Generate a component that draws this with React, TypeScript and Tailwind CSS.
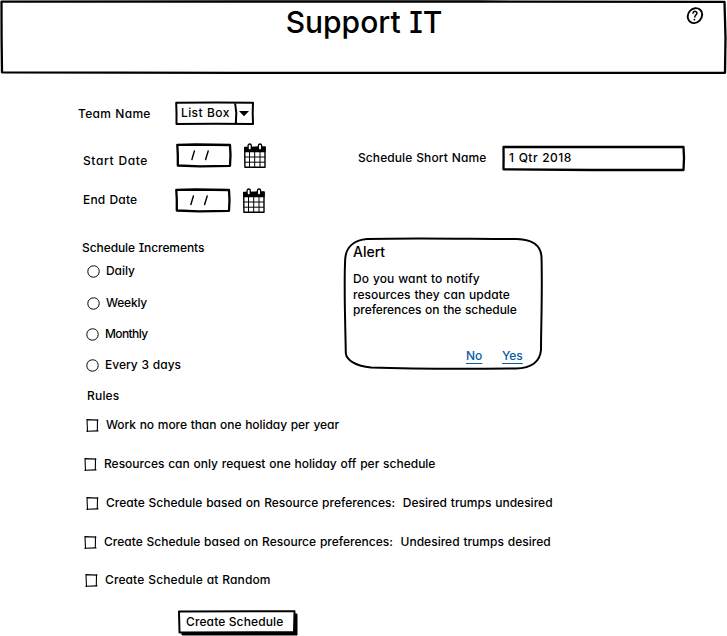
import type { ReactNode } from "react";

type TextProps = { children: ReactNode; className?: string };

function Text({ children, className = "" }: TextProps) {
  return <span className={`block h-5 whitespace-pre leading-5 ${className}`}>{children}</span>;
}

/* Hand-drawn outline laid behind the content of its parent. */
function Outline({ w, h, d, stroke = 2.3, fill = "none" }: { w: number; h: number; d: string; stroke?: number; fill?: string }) {
  return (
    <svg className="pointer-events-none absolute left-0 top-0 overflow-visible" width={w} height={h} viewBox={`0 0 ${w} ${h}`}>
      <path d={d} fill={fill} stroke="#000" strokeWidth={stroke} strokeLinejoin="round" />
    </svg>
  );
}

function HelpIcon() {
  return (
    <svg width="18" height="18" viewBox="0 0 18 18" fill="none" stroke="#000" strokeLinecap="round">
      <path d="M9 1.200C13 .900 16.400 3.600 16.200 7.600c-.200 4.300-3.500 8.300-7.900 8.500C4.200 16.300 1.500 13 1.700 9.400 1.900 5.600 4.800 1.500 9 1.200Z" strokeWidth="1.900" />
      <path d="M7 6.200C7.300 4.700 8.400 4.100 9.600 4.400c1.500.400 1.700 1.900.800 3C9.700 8.300 8.900 8.700 8.800 10" strokeWidth="1.500" />
      <path d="M8.400 12.500v.200" strokeWidth="1.700" />
    </svg>
  );
}

function CalendarIcon() {
  return (
    <svg width="24" height="26" viewBox="0 0 24 26">
      <path d="M1.700 4.500 22 4v20.300H1.900Z" fill="#fff" stroke="#000" strokeWidth="1.400" strokeLinejoin="round" />
      <path d="M1 4.200 22.700 3.700v5.500H1Z" />
      <path d="M6.500 9v15M11.700 9v15M17 9v15M2 14h20M2 19.200h20" stroke="#000" strokeWidth="1" />
      <rect x="5.100" y="1" width="3.200" height="6" rx="1.600" fill="#fff" stroke="#000" strokeWidth="1.300" />
      <rect x="15.400" y="1" width="3.200" height="6" rx="1.600" fill="#fff" stroke="#000" strokeWidth="1.300" />
    </svg>
  );
}

function DateBox() {
  return (
    <div className="relative h-[25px] w-[56px]">
      <Outline w={56} h={25} d="M1.300 1.800 20 1.500 54 2 54.500 12 54 22.800 24 23.300 1.800 22.500 1.800 12Z" />
      <svg className="absolute left-[15px] top-[7px]" width="20" height="11" viewBox="0 0 20 11" stroke="#000" strokeWidth="1.400" strokeLinecap="round">
        <path d="M3.400 1 .900 9.500M17.200 1 14.600 9.500" />
      </svg>
    </div>
  );
}

function Radio({ label, className, text }: { label: string; className: string; text: string }) {
  return (
    <div className={`flex h-5 items-center ${className}`}>
      <svg className="mr-[6px] shrink-0" width="13" height="13" viewBox="0 0 13 13">
        <path d="M6.500.800C10 .700 12.200 3.300 12.200 6.500c0 3.300-2.500 5.700-5.800 5.700C3 12.200.800 9.600.800 6.500.800 3.200 3.200.900 6.500.800Z" fill="none" stroke="#000" strokeWidth="1" />
      </svg>
      <Text className={text}>{label}</Text>
    </div>
  );
}

function Check({ label, className, text }: { label: string; className: string; text: string }) {
  return (
    <div className={`flex h-5 items-center ${className}`}>
      <svg className="mr-[7px] shrink-0" width="13" height="13" viewBox="0 0 13 13">
        <path d="M.800.600 12 1.100M11.500.600 11.300 12.300M12 11.900.800 12.200M1.500 12.600 1 .800" fill="none" stroke="#000" strokeWidth="1.100" strokeLinecap="round" />
      </svg>
      <Text className={text}>{label}</Text>
    </div>
  );
}

export default function App() {
  return (
    <div className="h-[636px] w-[727px] overflow-hidden bg-white font-['Inter','Liberation_Sans',sans-serif] text-[12px] font-[450] text-black [word-spacing:0.600px] [font-feature-settings:'cv11','cv08']">
      <header className="relative flex h-[74px] justify-center">
        <Outline w={727} h={74} d="M1.500 1.600 240 1.500 480 1.500 724.500 1.800 725.500 38 725 72.800 480 72.800 240 72.800 2 72.300 1.600 38Z" />
        <h1 className="ml-px mt-[2px] h-10 whitespace-pre text-[30px] font-[450] leading-10">Support IT</h1>
        <div className="absolute left-[686px] top-[7px]"><HelpIcon /></div>
      </header>

      <div className="flex h-[312px]">
        <section className="w-[344px]">
          <div className="flex pt-[27px]">
            <Text className="ml-[78px] mt-[3px] w-[97px] tracking-[0.300px]">Team Name</Text>
            <div className="relative flex h-[25px] w-[79px]">
              <Outline w={79} h={25} d="M1.200 1.700 40 1.500 78 1.800 77.700 12 78 23 40 22.800 1.500 23 1.500 12ZM60 1.500 61.300 12 60.800 22.700" stroke={2} />
              <Text className="ml-[6px] mt-[2px] w-[57px] tracking-[0.380px]">List Box</Text>
              <svg className="mt-[9px]" width="12" height="7" viewBox="0 0 12 7"><path d="M1 1h10L6 6.200Z" /></svg>
            </div>
          </div>
          <div className="flex pt-[17px]">
            <Text className="ml-[83px] mt-[8px] w-[93px] tracking-[0.600px]">Start Date</Text>
            <DateBox />
            <div className="ml-[11px]"><CalendarIcon /></div>
          </div>
          <div className="flex pt-[17px]">
            <Text className="ml-[83px] mt-[2px] w-[92px] tracking-[0.200px]">End Date</Text>
            <DateBox />
            <div className="ml-[11px]"><CalendarIcon /></div>
          </div>
          <Text className="ml-[82px] mt-[24px] tracking-[-0.080px]">Schedule Increments</Text>
          <Radio label="Daily" className="ml-[87px] mt-[3px]" text="tracking-[-0.050px]" />
          <Radio label="Weekly" className="ml-[87px] mt-[12px]" text="tracking-[-0.200px]" />
          <Radio label="Monthly" className="ml-[86px] mt-[11px]" text="tracking-[-0.600px]" />
          <Radio label="Every 3 days" className="ml-[86px] mt-[11px]" text="" />
        </section>

        <section className="flex-1">
          <div className="flex pt-[71px]">
            <Text className="ml-[14px] mt-[3px] w-[144px] tracking-[0.090px]">Schedule Short Name</Text>
            <div className="relative h-[27px] w-[183px]">
              <Outline w={183} h={27} d="M1.500 2 90 2 181.500 2 182 13 181.500 25 90 25 1.500 24.300 1.600 13Z" stroke={2.300} />
              <Text className="ml-[7px] mt-[3px] tracking-[0.450px]">1 Qtr 2018</Text>
            </div>
          </div>
          <div className="relative mt-[65px] h-[133px] w-[199px]">
            <Outline w={199} h={133} stroke={2} d="M23 2C70 .500 130 2 173 2 188 2.500 197 8 197.500 20 198.500 55 197 90 197 113 196 125 187 131 172 131.500 120 132 70 132 27 130.500 12 129 2 123 1.800 116 1.300 85-.200 50 1.200 22 2 10 10 3 23 2Z" />
            <div className="flex flex-col pl-[9px] pt-[5px]">
              <Text className="text-[14px]">Alert</Text>
              <div className="mt-[9px] leading-[15.500px]">
                <p className="whitespace-pre tracking-[0.090px]">Do you want to notify</p>
                <p className="whitespace-pre tracking-[0.040px]">resources they can update</p>
                <p className="whitespace-pre tracking-[-0.080px]">preferences on the schedule</p>
              </div>
              <div className="mt-[28px] flex text-[#0b5aa4]">
                <a className="ml-[113px] w-[36px] leading-5"><span className="underline underline-offset-[3px]">No</span></a>
                <a className="leading-5"><span className="underline underline-offset-[3px]">Yes</span></a>
              </div>
            </div>
          </div>
        </section>
      </div>

      <section className="flex flex-col items-start">
        <Text className="ml-[87px] tracking-[0.200px]">Rules</Text>
        <Check label="Work no more than one holiday per year" className="ml-[86px] mt-[9px]" text="tracking-[-0.060px]" />
        <Check label="Resources can only request one holiday off per schedule" className="ml-[84px] mt-[19px]" text="tracking-[-0.005px]" />
        <Check label="Create Schedule based on Resource preferences:  Desired trumps undesired" className="ml-[86px] mt-[19px]" text="tracking-[0.015px]" />
        <Check label="Create Schedule based on Resource preferences:  Undesired trumps desired" className="ml-[84px] mt-[19px]" text="tracking-[0.010px]" />
        <Check label="Create Schedule at Random" className="ml-[85px] mt-[18px]" text="tracking-[0.110px]" />
        <button className="relative ml-[178px] mt-[20px] flex h-[26px] w-[120px] text-left">
          <Outline w={120} h={26} d="M4 4H119V25H4Z" fill="#000" stroke={1} />
          <Outline w={120} h={26} d="M1 1.500 116.500 1.300 116 22 1.500 22.500Z" fill="#fff" stroke={2} />
          <Text className="relative ml-[8px] mt-[2px] tracking-[0.120px]">Create Schedule</Text>
        </button>
      </section>
    </div>
  );
}
